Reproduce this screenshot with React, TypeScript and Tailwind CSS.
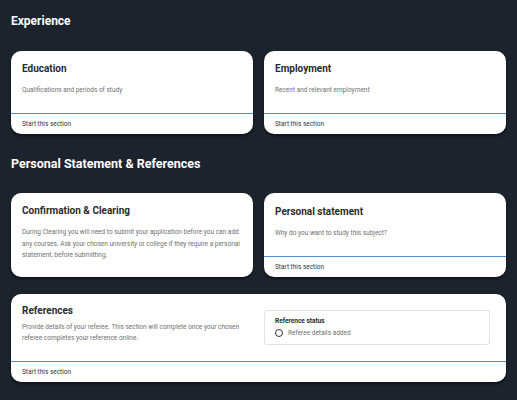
import React from "react";

const font = { fontFamily: "Roboto, 'Noto Sans', sans-serif" };

function Footer() {
  return (
    <div className="h-[21px] border-t border-[#4a8fd8] px-[11px] flex items-center text-[6.5px] leading-[8px] text-[#333]">
      Start this section
    </div>
  );
}

function SmallCard({
  title,
  desc,
  footer = true,
  pt = "pt-[12px]",
}: {
  title: string;
  desc: string;
  footer?: boolean;
  pt?: string;
}) {
  return (
    <div className="bg-white rounded-[10px] flex flex-col shadow-[0_2px_3px_rgba(0,0,0,0.5)] overflow-hidden">
      <div className={`flex-1 px-[11px] ${pt}`}>
        <div className="text-[10px] leading-[12px] font-bold text-[#2b2b2b]">{title}</div>
        <div className="mt-[10px] text-[6.5px] leading-[11.5px] text-[#707070]">{desc}</div>
      </div>
      {footer && <Footer />}
    </div>
  );
}

export default function App() {
  return (
    <div className="w-[517px] h-[400px] bg-[#1c232d] px-[11px] pt-[13px] overflow-hidden" style={font}>
      <h2 className="text-[12px] leading-[16px] font-bold text-white">Experience</h2>
      <div className="mt-[22px] grid grid-cols-2 gap-[11px] h-[83px]">
        <SmallCard title="Education" desc="Qualifications and periods of study" />
        <SmallCard title="Employment" desc="Recent and relevant employment" />
      </div>
      <h2 className="mt-[22px] text-[12.5px] leading-[16px] font-bold text-white">
        Personal Statement &amp; References
      </h2>
      <div className="mt-[21px] grid grid-cols-2 gap-[11px] h-[84px]">
        <div className="bg-white rounded-[10px] shadow-[0_2px_3px_rgba(0,0,0,0.5)] px-[11px] pt-[12px] pr-[12px]">
          <div className="text-[10px] leading-[12px] font-bold text-[#2b2b2b]">Confirmation &amp; Clearing</div>
          <div className="mt-[10px] text-[6.5px] leading-[11.5px] text-[#707070]">
            During Clearing you will need to submit your application before you can add any courses. Ask your
            chosen university or college if they require a personal statement, before submitting.
          </div>
        </div>
        <SmallCard title="Personal statement" desc="Why do you want to study this subject?" pt="pt-[13px]" />
      </div>
      <div className="mt-[17px] bg-white rounded-[10px] shadow-[0_2px_3px_rgba(0,0,0,0.5)] h-[88px] flex flex-col overflow-hidden">
        <div className="flex-1 grid grid-cols-2 gap-[11px]">
          <div className="pl-[11px] pt-[11px] pr-[6px]">
            <div className="text-[10px] leading-[12px] font-bold text-[#2b2b2b]">References</div>
            <div className="mt-[5px] text-[6.5px] leading-[11px] text-[#707070]">
              Provide details of your referee. This section will complete once your chosen referee completes your
              reference online.
            </div>
          </div>
          <div className="pt-[16px] pr-[16px]">
            <div className="h-[35px] border border-[#e3e3e3] rounded-[3px] px-[10px] pt-[6px]">
              <div className="text-[6.5px] leading-[8px] font-bold text-[#2b2b2b]">Reference status</div>
              <div className="mt-[4px] flex items-center gap-[5px]">
                <span className="w-[8px] h-[8px] rounded-full border border-[#333] box-border" />
                <span className="text-[6.5px] leading-[8px] text-[#707070]">Referee details added</span>
              </div>
            </div>
          </div>
        </div>
        <Footer />
      </div>
    </div>
  );
}
